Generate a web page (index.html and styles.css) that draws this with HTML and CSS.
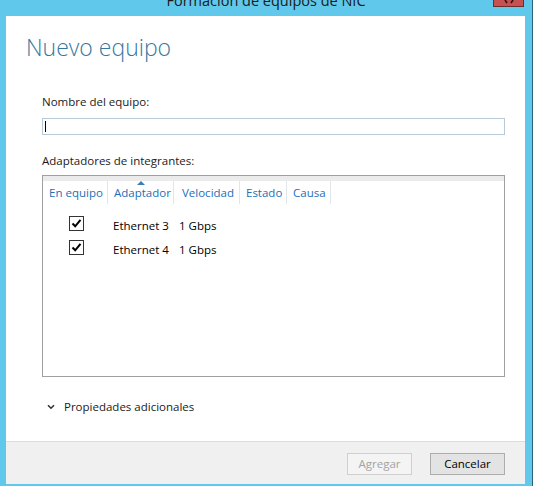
FILE: index.html
```html
<!DOCTYPE html>
<html lang="es">
<head>
<meta charset="utf-8">
<title>Formación de equipos de NIC</title>
<link rel="stylesheet" href="styles.css">
</head>
<body>
<div class="window">
  <div class="titlebar">
    <div class="title">Formación de equipos de NIC</div>
    <div class="close">
      <svg class="close-x" width="10" height="4" viewBox="0 0 10 4"><path d="M1 0 L3 3 M9 0 L7 3" stroke="#2a1010" stroke-width="1.6" fill="none"/></svg>
    </div>
  </div>
  <div class="dialog">
    <div class="content">
      <h1 class="heading">Nuevo equipo</h1>
      <div class="form">
        <div class="label">Nombre del equipo:</div>
        <div class="input"><span class="caret"></span></div>
        <div class="label label-members">Adaptadores de integrantes:</div>
        <div class="table">
          <div class="table-top"></div>
          <div class="thead">
            <div class="th c1">En equipo</div>
            <div class="th c2"><span class="sort-arrow"></span>Adaptador</div>
            <div class="th c3">Velocidad</div>
            <div class="th c4">Estado</div>
            <div class="th c5">Causa</div>
          </div>
          <div class="tbody">
            <div class="row">
              <span class="checkbox"><svg width="13" height="13" viewBox="0 0 13 13"><path d="M2.5 6.5 L5.2 9.3 L10.5 2.8" stroke="#000" stroke-width="2" fill="none"/></svg></span>
              <span class="cell-name">Ethernet 3</span>
              <span class="cell-speed">1 Gbps</span>
            </div>
            <div class="row">
              <span class="checkbox"><svg width="13" height="13" viewBox="0 0 13 13"><path d="M2.5 6.5 L5.2 9.3 L10.5 2.8" stroke="#000" stroke-width="2" fill="none"/></svg></span>
              <span class="cell-name">Ethernet 4</span>
              <span class="cell-speed">1 Gbps</span>
            </div>
          </div>
        </div>
        <div class="more">
          <svg class="chevron" width="8" height="6" viewBox="0 0 8 6"><path d="M1 1.2 L4 4.2 L7 1.2" stroke="#333" stroke-width="1.6" fill="none"/></svg>
          <span>Propiedades adicionales</span>
        </div>
      </div>
    </div>
    <div class="footer">
      <button class="btn btn-disabled" type="button">Agregar</button>
      <button class="btn btn-cancel" type="button">Cancelar</button>
    </div>
  </div>
</div>
</body>
</html>
```

FILE: styles.css
```css
* { box-sizing: border-box; }

html, body {
  margin: 0;
  padding: 0;
  background: #60c8eb;
}

body {
  font-family: "Open Sans", "Noto Sans", sans-serif;
  font-size: 11.5px;
  color: #1a1a1a;
}

.window {
  width: 533px;
  height: 486px;
  background: #60c8eb;
  border-right: 1px solid #2f6378;
  display: flex;
  flex-direction: column;
  overflow: hidden;
}

.titlebar {
  height: 16px;
  position: relative;
  flex: none;
}

.title {
  font-size: 14.5px;
  line-height: 16px;
  text-align: center;
  color: #1a1a1a;
  margin-top: -7px;
}

.close {
  position: absolute;
  top: 0;
  right: 8px;
  width: 31px;
  height: 7px;
  background: #c75050;
  border: 1px solid #6b2e2e;
  border-top: none;
  display: flex;
  justify-content: center;
}

.close-x { display: block; }

.dialog {
  flex: 1;
  margin: 0 7px 2px 6px;
  background: #ffffff;
  display: flex;
  flex-direction: column;
}

.content {
  flex: 1;
  padding: 0 20px;
}

.heading {
  margin: 16px 0 0 0;
  font-size: 23px;
  line-height: 30px;
  font-weight: 300;
  color: #3478a2;
}

.form {
  margin-left: 16px;
}

.label {
  line-height: 16px;
  margin-top: 32px;
  color: #1a1a1a;
}

.input {
  margin-top: 8px;
  height: 17px;
  border: 1px solid #b9cad7;
  background: #fff;
  display: flex;
  align-items: center;
  padding-left: 2px;
}

.caret {
  width: 1px;
  height: 11px;
  background: #000;
}

.label-members {
  margin-top: 18px;
}

.table {
  margin-top: 6px;
  height: 202px;
  border: 1px solid #a0a0a0;
  background: #fff;
}

.table-top {
  height: 5px;
  background: #ebebeb;
}

.thead {
  display: flex;
  height: 23px;
}

.th {
  position: relative;
  color: #1d6fb8;
  line-height: 16px;
  padding-top: 4px;
  border-right: 1px solid #e1e6ea;
  white-space: nowrap;
}

.c1 { width: 65px; padding-left: 6px; }
.c2 { width: 66px; padding-left: 6px; }
.c3 { width: 66px; text-align: right; padding-right: 5px; }
.c4 { width: 47px; padding-left: 6px; }
.c5 { width: 44px; padding-left: 6px; }

.sort-arrow {
  position: absolute;
  top: 0;
  left: 50%;
  margin-left: -4px;
  width: 0;
  height: 0;
  border-left: 4px solid transparent;
  border-right: 4px solid transparent;
  border-bottom: 4px solid #3a7db7;
}

.tbody {
  padding-top: 10px;
}

.row {
  display: flex;
  align-items: center;
  height: 24px;
  padding-left: 26px;
  line-height: 16px;
  color: #000;
}

.checkbox {
  width: 15px;
  height: 15px;
  border: 1px solid #333;
  background: #fff;
  margin-bottom: 5px;
  display: flex;
  align-items: center;
  justify-content: center;
  flex: none;
}

.checkbox svg { display: block; }

.cell-name {
  margin-left: 29px;
  width: 66px;
}

.more {
  margin-top: 22px;
  display: flex;
  align-items: center;
  line-height: 16px;
  padding-left: 5px;
  color: #1a1a1a;
}

.chevron {
  display: block;
  margin-right: 9px;
}

.footer {
  flex: none;
  height: 43px;
  background: #f0f0f0;
  border-top: 1px solid #dcdcdc;
  display: flex;
  justify-content: flex-end;
  align-items: flex-start;
  gap: 18px;
  padding: 11px 20px 0 0;
}

.btn {
  height: 22px;
  font-family: "Open Sans", "Noto Sans", sans-serif;
  font-size: 11.5px;
  line-height: 16px;
  padding: 0;
  margin: 0;
}

.btn-disabled {
  width: 65px;
  background: #f4f4f4;
  border: 1px solid #cfcfcf;
  color: #a3a3a3;
}

.btn-cancel {
  width: 75px;
  background: #e3e3e3;
  border: 1px solid #adadad;
  color: #000;
}
```
